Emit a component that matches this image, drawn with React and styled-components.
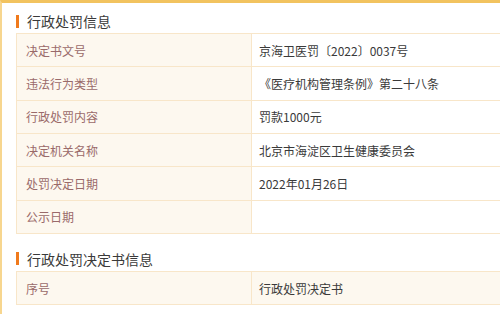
import React from "react";
import styled, { createGlobalStyle } from "styled-components";

const GlobalStyle = createGlobalStyle`
	html, body {
		margin: 0;
		padding: 0;
		background: #ffffff;
		font-family: "Noto Sans CJK SC", "Noto Sans", sans-serif;
	}
`;

const Panel = styled.div`
	width: 500px;
	height: 314px;
	box-sizing: border-box;
	border-top: 3px solid #f2c35f;
	border-left: 2px solid #f7d68f;
	padding: 6px 0 0 14px;
	overflow: hidden;
	background: #ffffff;
`;

const SectionTitle = styled.div`
	display: flex;
	align-items: center;
	height: 24px;
	font-size: 14px;
	color: #3a3a3a;
	&::before {
		content: "";
		display: block;
		width: 3px;
		height: 13px;
		background: #f07a1c;
		margin-right: 8px;
	}
`;

const Table = styled.div`
	display: grid;
	grid-template-columns: 235px 260px;
	border-top: 1px solid #f8e6c9;
	margin-bottom: ${(p) => p.$gap || 0}px;
`;

const Cell = styled.div`
	height: 32.33px;
	display: flex;
	align-items: center;
	box-sizing: content-box;
	border-bottom: 1px solid #f8e6c9;
	border-left: 1px solid #f8e6c9;
	padding-left: ${(p) => (p.$label ? 9 : 7)}px;
	font-size: 12px;
	color: ${(p) => (p.$label ? "#9a6a6a" : "#3a3a3a")};
	background: ${(p) => (p.$label || p.$head ? "#fdf8ef" : "#ffffff")};
	white-space: nowrap;
`;

const info = [
	["决定书文号", "京海卫医罚〔2022〕0037号"],
	["违法行为类型", "《医疗机构管理条例》第二十八条"],
	["行政处罚内容", "罚款1000元"],
	["决定机关名称", "北京市海淀区卫生健康委员会"],
	["处罚决定日期", "2022年01月26日"],
	["公示日期", ""],
];

export default function App() {
	return (
		<>
			<GlobalStyle />
			<Panel>
				<SectionTitle>行政处罚信息</SectionTitle>
				<Table $gap={13}>
					{info.map(([k, v]) => (
						<React.Fragment key={k}>
							<Cell $label>{k}</Cell>
							<Cell>{v}</Cell>
						</React.Fragment>
					))}
				</Table>
				<SectionTitle>行政处罚决定书信息</SectionTitle>
				<Table>
					<Cell $label>序号</Cell>
					<Cell $head>行政处罚决定书</Cell>
				</Table>
			</Panel>
		</>
	);
}
